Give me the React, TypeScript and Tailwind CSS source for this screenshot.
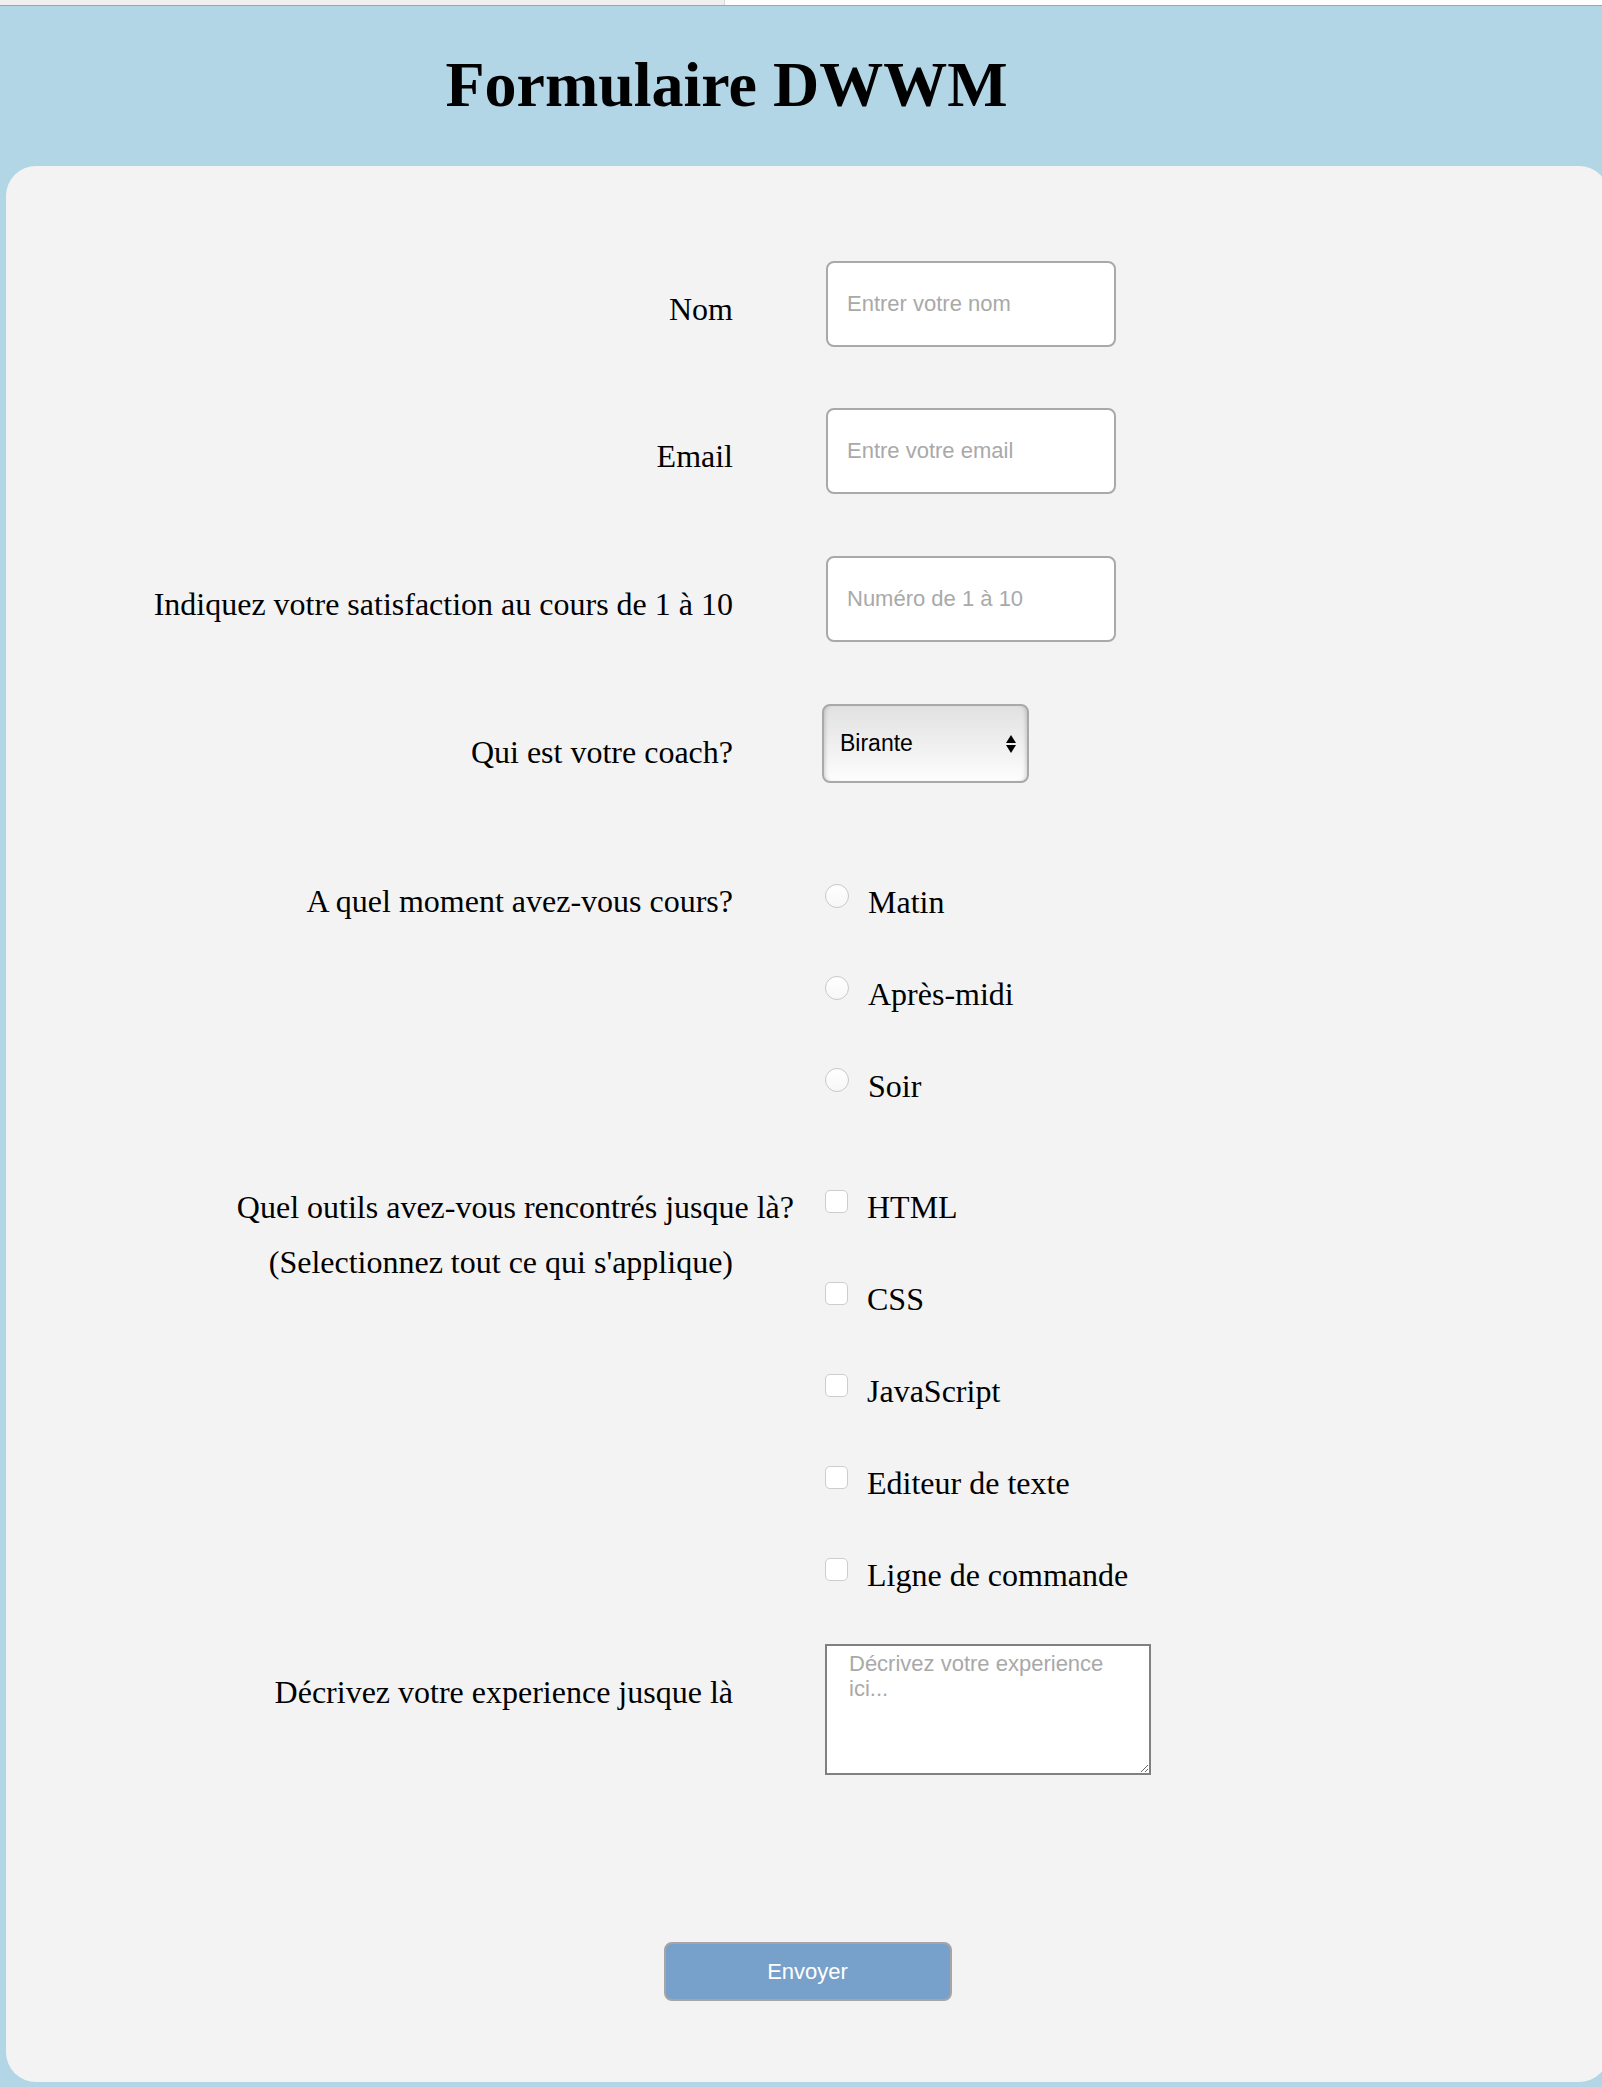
const labelCls =
  "w-[727px] shrink-0 text-right font-['Liberation_Serif',serif] text-[32px] leading-[37px] text-black";
const optionText = "font-['Liberation_Serif',serif] text-[32px] leading-[37px] text-black";

function TextField({ label, placeholder, className }: { label: string; placeholder: string; className?: string }) {
  return (
    <div className={`flex ${className ?? ""}`}>
      <label className={`${labelCls} pt-[30px]`}>{label}</label>
      <input
        type="text"
        placeholder={placeholder}
        className="ml-[93px] h-[86px] w-[290px] rounded-[8px] border-2 border-[#a9a9a9] bg-white px-[19px] font-['Liberation_Sans',Arial,sans-serif] text-[22px] text-black outline-none placeholder:text-[#a9a9a9]"
      />
    </div>
  );
}

const moments = ["Matin", "Après-midi", "Soir"];
const outils = ["HTML", "CSS", "JavaScript", "Editeur de texte", "Ligne de commande"];

export default function App() {
  return (
    <div className="min-h-[2087px] w-full overflow-hidden bg-[#b3d6e7] pb-[5px]">
      {/* bout de barre du navigateur */}
      <div className="flex h-[6px] border-b border-[#8eaabb]">
        <div className="w-[725px] border-r border-[#d6d6d6] bg-[#efefef]" />
        <div className="flex-1 bg-white" />
      </div>

      <h1 className="mt-[42px] mb-[44px] w-[1453px] text-center font-['Liberation_Serif',serif] text-[64px] font-bold leading-[74px] text-black">
        Formulaire DWWM
      </h1>

      <form className="ml-[6px] w-[1603px] rounded-[30px] bg-[#f3f3f3] pt-[95px] pb-[81px]">
        <TextField label="Nom" placeholder="Entrer votre nom" />
        <TextField label="Email" placeholder="Entre votre email" className="mt-[61px]" />
        <TextField
          label="Indiquez votre satisfaction au cours de 1 à 10"
          placeholder="Numéro de 1 à 10"
          className="mt-[62px]"
        />

        {/* coach */}
        <div className="mt-[62px] flex">
          <label className={`${labelCls} pt-[30px]`}>Qui est votre coach?</label>
          <div className="relative ml-[89px] h-[79px] w-[207px]">
            <select
              defaultValue="Birante"
              className="h-full w-full appearance-none rounded-[8px] border-2 border-[#a9a9a9] bg-linear-to-b from-[#e1e1e1] via-[#efefef] to-[#fdfdfd] pl-[16px] font-['Liberation_Sans',Arial,sans-serif] text-[23px] text-black shadow-[inset_4px_0_4px_-3px_rgba(0,0,0,0.18),inset_-4px_0_4px_-3px_rgba(0,0,0,0.18)] outline-none"
            >
              <option>Birante</option>
              <option>Autre</option>
            </select>
            <svg
              className="pointer-events-none absolute right-[13px] top-[31px]"
              width="10"
              height="18"
              viewBox="0 0 10 18"
            >
              <path d="M0 8 L5 0 L10 8 Z" fill="#000" />
              <path d="M0 10 L10 10 L5 18 Z" fill="#000" />
            </svg>
          </div>
        </div>

        {/* moment */}
        <div className="mt-[100px] flex">
          <div className={labelCls}>A quel moment avez-vous cours?</div>
          <div className="ml-[92px] flex flex-col gap-[55px] pt-[1px]">
            {moments.map((m) => (
              <label key={m} className="flex items-start gap-[19px]">
                <input
                  type="radio"
                  name="moment"
                  className="h-[24px] w-[24px] shrink-0 appearance-none rounded-full border border-[#c9c9c9] bg-linear-to-b from-white to-[#f7f7f7]"
                />
                <span className={optionText}>{m}</span>
              </label>
            ))}
          </div>
        </div>

        {/* outils */}
        <div className="mt-[84px] flex">
          <div className="flex w-[727px] shrink-0 flex-col items-end">
            <div className={`${optionText} -mr-[61px]`}>Quel outils avez-vous rencontrés jusque là?</div>
            <div className={`${optionText} mt-[18px]`}>(Selectionnez tout ce qui s'applique)</div>
          </div>
          <div className="ml-[92px] flex flex-col gap-[55px]">
            {outils.map((o) => (
              <label key={o} className="flex items-start gap-[19px]">
                <input
                  type="checkbox"
                  className="mt-[1px] h-[23px] w-[23px] shrink-0 appearance-none rounded-[5px] border border-[#cdcdcd] bg-white"
                />
                <span className={optionText}>{o}</span>
              </label>
            ))}
          </div>
        </div>

        {/* experience */}
        <div className="mt-[50px] flex">
          <label className={`${labelCls} pt-[30px]`}>Décrivez votre experience jusque là</label>
          <textarea
            placeholder="Décrivez votre experience ici..."
            className="ml-[92px] h-[131px] w-[326px] border-2 border-[#808080] bg-white px-[22px] pt-[5px] font-['Liberation_Sans',Arial,sans-serif] text-[22px] leading-[25px] text-black outline-none placeholder:text-[#a9a9a9]"
          />
        </div>

        <div className="mt-[167px] flex justify-center">
          <button
            type="button"
            className="h-[59px] w-[288px] rounded-[8px] border-2 border-[#a5a5a5] bg-[#77a1cb] font-['Liberation_Sans',Arial,sans-serif] text-[22px] text-white"
          >
            Envoyer
          </button>
        </div>
      </form>
    </div>
  );
}
